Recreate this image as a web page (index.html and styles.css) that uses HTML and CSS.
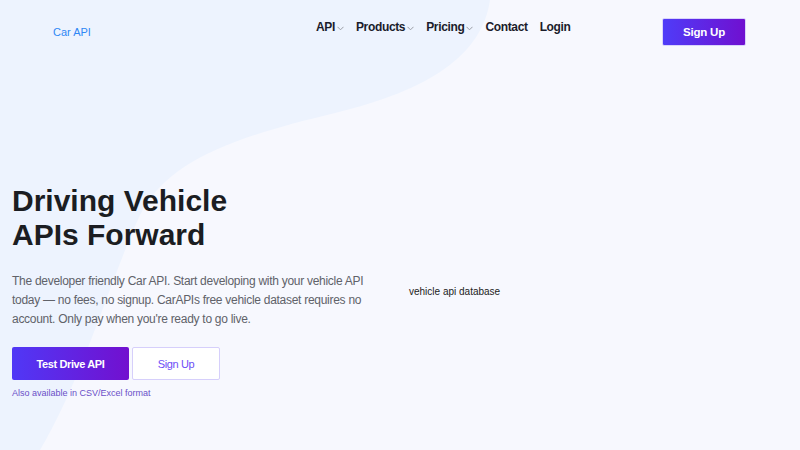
FILE: index.html
```html
<!DOCTYPE html>
<html lang="en">
<head>
<meta charset="utf-8">
<title>Car API</title>
<link rel="stylesheet" href="styles.css">
</head>
<body>
<svg class="blob" width="800" height="450" viewBox="0 0 800 450" aria-hidden="true">
  <path d="M0 0 L490 0 C482 55 430 90 335 113 C235 137 168 160 140 215 C112 275 82 380 40 450 L0 450 Z" fill="#edf3fe"/>
</svg>
<div class="page">
  <header class="header">
    <a class="logo" href="#">Car API</a>
    <nav class="nav">
      <a class="nav-item" href="#">API<svg class="chev" width="7" height="5" viewBox="0 0 7 5"><path d="M0.5 0.8 L3.5 3.8 L6.5 0.8" fill="none" stroke="#9a9da6" stroke-width="1"/></svg></a>
      <a class="nav-item" href="#">Products<svg class="chev" width="7" height="5" viewBox="0 0 7 5"><path d="M0.5 0.8 L3.5 3.8 L6.5 0.8" fill="none" stroke="#9a9da6" stroke-width="1"/></svg></a>
      <a class="nav-item" href="#">Pricing<svg class="chev" width="7" height="5" viewBox="0 0 7 5"><path d="M0.5 0.8 L3.5 3.8 L6.5 0.8" fill="none" stroke="#9a9da6" stroke-width="1"/></svg></a>
      <a class="nav-item" href="#">Contact</a>
      <a class="nav-item" href="#">Login</a>
    </nav>
    <a class="btn-signup" href="#">Sign Up</a>
  </header>
  <main class="hero">
    <div class="hero-text">
      <h1 class="title">Driving Vehicle<br>APIs Forward</h1>
      <p class="lead">The developer friendly Car API. Start developing with your vehicle API today — no fees, no signup. CarAPIs free vehicle dataset requires no account. Only pay when you're ready to go live.</p>
      <div class="actions">
        <a class="btn-primary" href="#">Test Drive API</a>
        <a class="btn-outline" href="#">Sign Up</a>
      </div>
      <a class="note" href="#">Also available in CSV/Excel format</a>
    </div>
    <div class="hero-media">
      <span class="alt">vehicle api database</span>
    </div>
  </main>
</div>
</body>
</html>
```

FILE: styles.css
```css
* { box-sizing: border-box; }
html, body { margin: 0; padding: 0; }
body {
  background: #f7f8fe;
  font-family: "Liberation Sans", Arial, sans-serif;
  width: 800px;
  height: 450px;
  overflow: hidden;
  position: relative;
}
a { text-decoration: none; }
.blob {
  position: absolute;
  left: 0;
  top: 0;
  z-index: 0;
}
.page {
  position: relative;
  z-index: 1;
}
.header {
  display: flex;
  align-items: flex-start;
  padding: 18px 54px 0 53px;
}
.logo {
  width: 263px;
  margin-top: 7px;
  font-size: 11px;
  line-height: 14px;
  color: #2f87f5;
}
.nav {
  display: flex;
  gap: 12px;
  margin-top: 1px;
}
.nav-item {
  display: flex;
  align-items: center;
  gap: 2px;
  font-size: 12px;
  line-height: 16px;
  font-weight: bold;
  letter-spacing: -0.35px;
  color: #1b1c2b;
}
.chev { margin-top: 3px; }
.btn-signup {
  margin-left: auto;
  width: 84px;
  height: 28px;
  display: flex;
  align-items: center;
  justify-content: center;
  background: linear-gradient(90deg, #4f3cf8, #7010d0);
  color: #fff;
  font-size: 11.5px;
  font-weight: bold;
  letter-spacing: -0.2px;
  border-radius: 2px;
  border: 1px solid #d9d4fb;
}
.hero {
  display: flex;
  align-items: center;
  padding: 138px 0 0 12px;
}
.hero-text {
  width: 397px;
}
.title {
  margin: 0;
  font-size: 30px;
  line-height: 34px;
  font-weight: bold;
  color: #1b1d22;
}
.lead {
  margin: 20px 0 0;
  font-size: 12px;
  line-height: 19px;
  letter-spacing: -0.28px;
  color: #606269;
  width: 360px;
}
.actions {
  display: flex;
  gap: 3px;
  margin-top: 18px;
}
.btn-primary {
  width: 117px;
  height: 33px;
  display: flex;
  align-items: center;
  justify-content: center;
  background: linear-gradient(90deg, #5038f6, #7210cf);
  color: #fff;
  font-size: 11px;
  font-weight: bold;
  letter-spacing: -0.4px;
  border-radius: 2px;
}
.btn-outline {
  width: 88px;
  height: 33px;
  display: flex;
  align-items: center;
  justify-content: center;
  background: #fff;
  border: 1px solid #d6cffb;
  color: #6d4ef6;
  font-size: 11px;
  letter-spacing: -0.4px;
  border-radius: 2px;
}
.note {
  display: block;
  margin-top: 7px;
  font-size: 9px;
  line-height: 12px;
  color: #6a4fc8;
}
.hero-media {
  flex: 1;
  display: flex;
  align-items: center;
}
.alt {
  font-size: 10px;
  color: #222;
}
```
